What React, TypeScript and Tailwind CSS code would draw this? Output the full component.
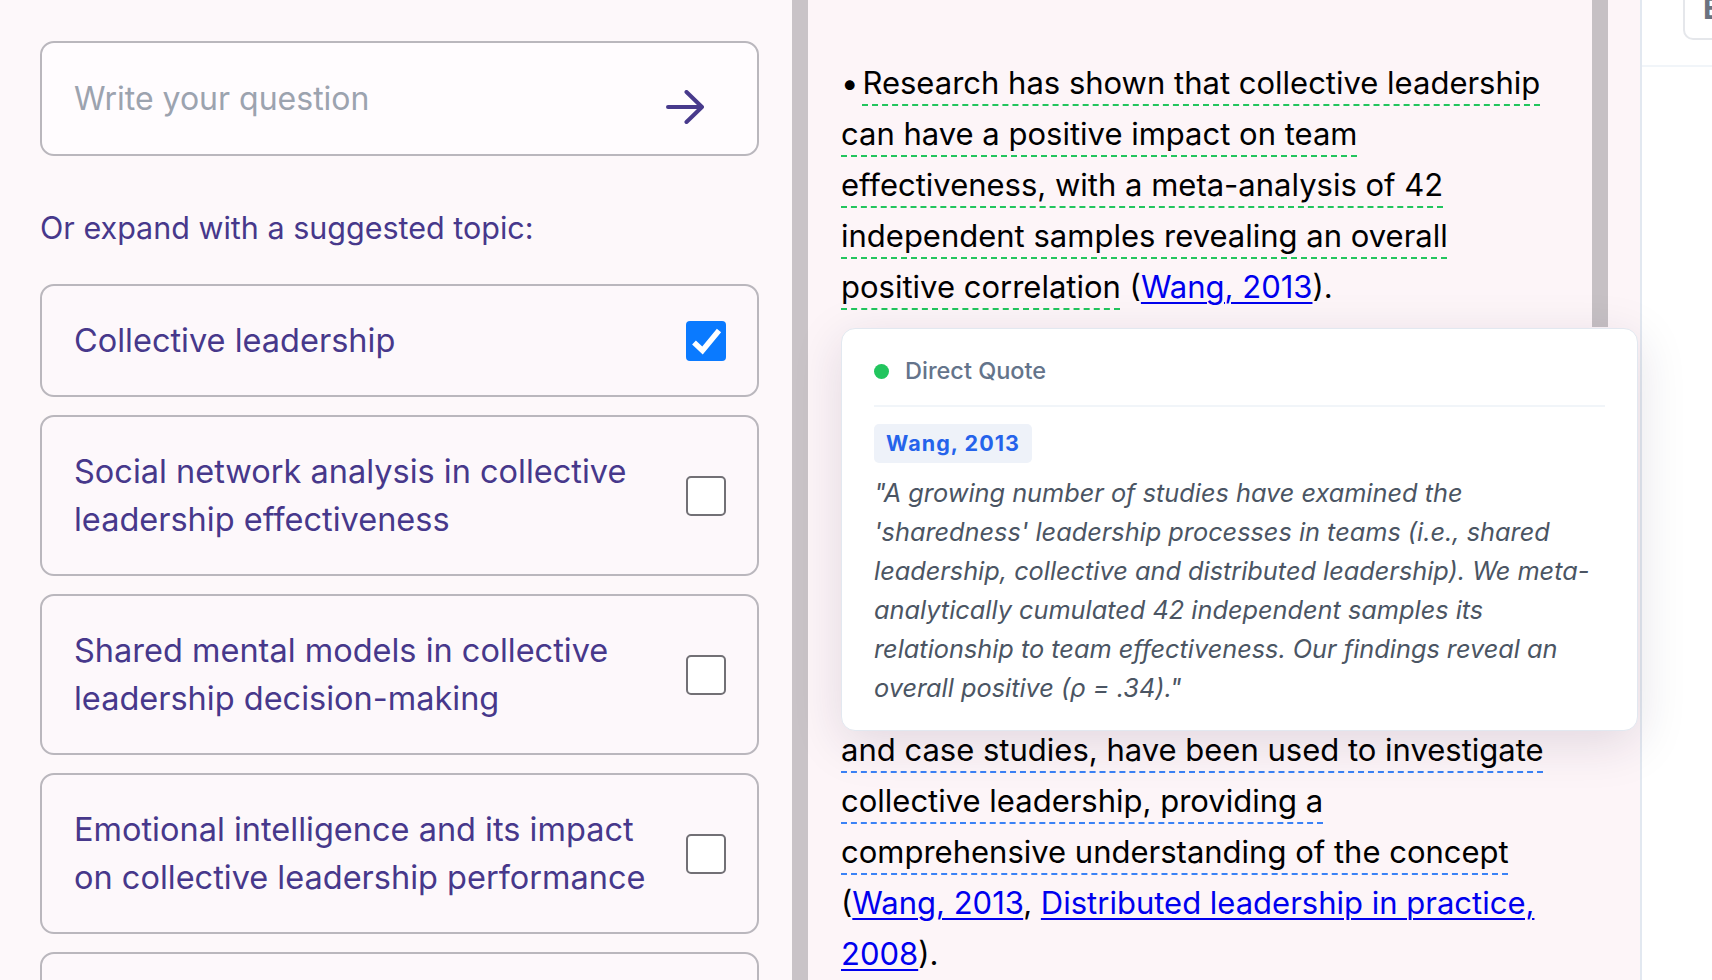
import React from "react";

type Topic = { lines: string[]; checked?: boolean };

const topics: Topic[] = [
  { lines: ["Collective leadership"], checked: true },
  { lines: ["Social network analysis in collective", "leadership effectiveness"] },
  { lines: ["Shared mental models in collective", "leadership decision-making"] },
  { lines: ["Emotional intelligence and its impact", "on collective leadership performance"] },
  { lines: ["Collective leadership in healthcare teams"] },
];

const quoteLines = [
  "\"A growing number of studies have examined the",
  "'sharedness' leadership processes in teams (i.e., shared",
  "leadership, collective and distributed leadership). We meta-",
  "analytically cumulated 42 independent samples its",
  "relationship to team effectiveness. Our findings reveal an",
  "overall positive (ρ = .34).\"",
];

// tail of the second bullet, the rest sits under the quote popover
const methodLines = [
  "and case studies, have been used to investigate",
  "collective leadership, providing a",
  "comprehensive understanding of the concept",
];

function withBreaks(lines: string[]) {
  return lines.map((l, i) => (
    <React.Fragment key={i}>
      {i > 0 && <br />}
      {l}
    </React.Fragment>
  ));
}

function Checkbox({ checked }: { checked?: boolean }) {
  if (checked) {
    return (
      <div className="w-[40px] h-[40px] shrink-0 rounded-[4px] bg-[#0a7aff] flex items-center justify-center">
        <svg width="40" height="40" viewBox="0 0 40 40" fill="none">
          <path d="M8 21.5L16.5 29.5L33 9.5" stroke="white" strokeWidth="5.5" strokeLinejoin="miter" />
        </svg>
      </div>
    );
  }
  return <div className="w-[40px] h-[40px] shrink-0 rounded-[5px] border-2 border-[#727075] bg-white" />;
}

function TopicCard({ topic }: { topic: Topic }) {
  return (
    <div className="flex items-center justify-between border-2 border-[#bab7bd] rounded-[14px] bg-[#fdf8fb] pl-[32px] pr-[31px] pt-[31px] pb-[30px]">
      <p className="text-[32.5px] leading-[48px] text-[#47388b]">{withBreaks(topic.lines)}</p>
      <Checkbox checked={topic.checked} />
    </div>
  );
}

function QuotePopover() {
  return (
    <div className="absolute left-[33px] top-[328px] w-[797px] rounded-[14px] border border-[#e2e8f0] bg-white shadow-[0_12px_50px_rgba(40,20,60,0.13)] px-[32px] pt-[28px] pb-[23px]">
      <div className="flex items-center gap-4 pb-[20px] border-b-2 border-[#f1f5f9]">
        <span className="w-[15px] h-[15px] rounded-full bg-[#22c55e]" />
        <span className="text-[23.5px] leading-[28px] font-medium text-[#64748b]">Direct Quote</span>
      </div>
      <div className="mt-[17px] inline-block rounded-[5px] bg-[#eef2f9] px-[12px] py-[6px] text-[21.5px] leading-[27px] font-bold tracking-wider text-[#2563eb]">
        Wang, 2013
      </div>
      <p className="mt-[8px] text-[25.3px] leading-[39px] italic text-[#4b5563]">{withBreaks(quoteLines)}</p>
    </div>
  );
}

export default function App() {
  return (
    <div className="w-[1712px] h-[980px] overflow-hidden flex font-[Inter,sans-serif]">
      {/* question + suggested topics */}
      <div className="w-[792px] shrink-0 bg-[#fdf8fa] pl-[40px] pr-[33px] pt-[41px]">
        <div className="h-[115px] flex items-center justify-between rounded-[14px] border-2 border-[#bab7bd] bg-[#fffcfe] pl-[32px] pr-[53px]">
          <span className="text-[32px] text-[#9ca3af]">Write your question</span>
          <svg className="mt-[16px]" width="38" height="34" viewBox="0 0 38 34" fill="none">
            <path d="M2 17H36M20.5 2L36 17L20.5 32" stroke="#483a8c" strokeWidth="4" strokeLinecap="round" strokeLinejoin="round" />
          </svg>
        </div>
        <p className="mt-[52px] text-[30.5px] leading-[40px] text-[#47388b]">Or expand with a suggested topic:</p>
        <div className="mt-[36px] flex flex-col gap-[18px]">
          {topics.map((t, i) => (
            <TopicCard key={i} topic={t} />
          ))}
        </div>
      </div>

      <div className="w-[16px] shrink-0 bg-[#c9c3c7]" />

      {/* answer */}
      <div className="relative z-10 w-[834px] shrink-0 bg-[#fdf5f8] border-r-2 border-[#e2e8f0] pl-[33px] pt-[57px] text-[31px] leading-[51px] text-black">
        <p>
          •
          <span className="ml-[4px] underline decoration-dashed decoration-[#22c55e] decoration-2 underline-offset-[10px]">
            {withBreaks([
              "Research has shown that collective leadership",
              "can have a positive impact on team",
              "effectiveness, with a meta-analysis of 42",
              "independent samples revealing an overall",
              "positive correlation",
            ])}
          </span>{" "}
          (<a className="text-[#0000ee] underline decoration-2 underline-offset-[4px]">Wang, 2013</a>).
        </p>
        <p className="mt-[412px]">
          <span className="underline decoration-dashed decoration-[#3b82f6] decoration-2 underline-offset-[10px]">
            {withBreaks(methodLines)}
          </span>
          <br />(
          <a className="text-[#0000ee] underline decoration-2 underline-offset-[4px]">Wang, 2013</a>,{" "}
          <a className="text-[#0000ee] underline decoration-2 underline-offset-[4px]">
            Distributed leadership in practice,
            <br />
            2008
          </a>
          ).
        </p>

        <div className="absolute left-[784px] top-0 w-[16px] h-[327px] bg-[#c6c0c4]" />
        <QuotePopover />
      </div>

      {/* side rail */}
      <div className="flex-1 bg-white">
        <div className="h-[67px] border-b-2 border-[#f1f5f9]">
          <div className="ml-[41px] h-[40px] overflow-hidden rounded-bl-[10px] border-l-2 border-b-2 border-[#e5e7eb] pl-[18px]">
            <span className="block -mt-[9px] text-[30px] leading-[34px] font-bold text-[#6b7280]">Export</span>
          </div>
        </div>
      </div>
    </div>
  );
}
